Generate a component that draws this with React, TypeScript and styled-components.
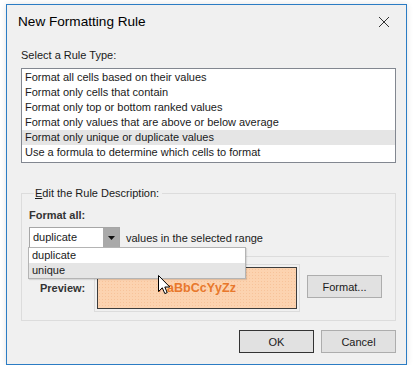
import styled, { createGlobalStyle } from "styled-components";

const GlobalStyle = createGlobalStyle`
  html, body {
    margin: 0;
    padding: 0;
    background: #ffffff;
  }
  body {
    font-family: "Liberation Sans", Arial, sans-serif;
    font-size: 11px;
    color: #1a1a1a;
  }
`;

const Window = styled.div`
  position: relative;
  box-sizing: border-box;
  margin: 4px 0 0 6px;
  width: 401px;
  height: 361px;
  background: #f0f0f0;
  border: 1px solid #2b7cc4;
  box-shadow: 0 0 6px rgba(0, 0, 0, 0.12);
`;

const TitleBar = styled.div`
  display: flex;
  align-items: center;
  justify-content: space-between;
  height: 33px;
  padding: 0 16px 0 11px;
  font-size: 13.6px;
  color: #000;
`;

const Body = styled.div`
  padding: 0 10px 0 14px;
`;

const Label = styled.div`
  height: 14px;
  line-height: 14px;
  margin: 10px 0 6px 0;
`;

const ListBox = styled.div`
  box-sizing: border-box;
  height: 95px;
  border: 1px solid #828790;
  background: #ffffff;
  padding-top: 1px;
`;

const ListItem = styled.div<{ $selected?: boolean }>`
  height: 15px;
  line-height: 15px;
  padding-left: 3px;
  background: ${(p) => (p.$selected ? "#e5e5e5" : "transparent")};
`;

const Group = styled.fieldset`
  box-sizing: border-box;
  margin: 23px 0 0 0;
  padding: 7px 6px 7px 7px;
  height: 135px;
  border: 1px solid #dcdcdc;
`;

const Legend = styled.legend`
  margin-left: 5px;
  padding: 0 3px 0 1px;
  line-height: 14px;
`;

const Accel = styled.span`
  text-decoration: underline;
`;

const Bold = styled.div`
  font-weight: 700;
  color: #333;
  line-height: 16px;
`;

const ComboRow = styled.div`
  display: flex;
  align-items: center;
  gap: 6px;
  margin-top: 4px;
`;

const Combo = styled.div`
  box-sizing: border-box;
  display: flex;
  width: 91px;
  height: 21px;
  border: 1px solid #a6a6a6;
  background: #ffffff;
`;

const ComboText = styled.div`
  flex: 1;
  padding-left: 3px;
  line-height: 19px;
`;

const ComboButton = styled.div`
  width: 16px;
  display: flex;
  align-items: center;
  justify-content: center;
  background: #a9a9a9;
`;

const Separator = styled.div`
  height: 1px;
  margin: 8px 0 0 0;
  background: #dcdcdc;
`;

const PreviewRow = styled.div`
  display: flex;
  align-items: center;
  margin-top: 7px;
`;

const PreviewLabel = styled(Bold)`
  width: 65px;
  padding-left: 11px;
  box-sizing: border-box;
`;

const PreviewFrame = styled.div`
  box-sizing: border-box;
  width: 206px;
  height: 48px;
  padding: 2px;
  border: 1px solid #dcdcdc;
`;

const PreviewSwatch = styled.div`
  box-sizing: border-box;
  height: 100%;
  display: flex;
  align-items: center;
  justify-content: center;
  border: 1px solid #3c3c3c;
  background-color: #fcd3b0;
  background-image: radial-gradient(#f7c39a 0.8px, transparent 0.9px);
  background-size: 3px 3px;
  color: #e8782c;
  font-weight: 700;
  font-size: 12.5px;
`;

const Button = styled.button<{ $default?: boolean }>`
  box-sizing: border-box;
  width: 75px;
  height: 23px;
  padding: 0;
  font: inherit;
  color: #1a1a1a;
  background: #e1e1e1;
  border: 1px solid ${(p) => (p.$default ? "#333333" : "#adadad")};
`;

const FormatButton = styled(Button)`
  margin: -3px 0 0 7px;
`;

const Footer = styled.div`
  display: flex;
  justify-content: flex-end;
  gap: 7px;
  margin-top: 9px;
`;

const Dropdown = styled.div`
  position: absolute;
  left: 21px;
  top: 242px;
  box-sizing: border-box;
  width: 218px;
  height: 32px;
  background: #ffffff;
  border: 1px solid #b4b4b4;
  box-shadow: 1px 1px 1px rgba(0, 0, 0, 0.1);
`;

const DropItem = styled.div<{ $hover?: boolean }>`
  height: 15px;
  line-height: 15px;
  padding-left: 3px;
  background: ${(p) => (p.$hover ? "#e5e5e5" : "transparent")};
`;

const Cursor = styled.svg`
  position: absolute;
  left: 151px;
  top: 270px;
`;

export default function App() {
  return (
    <>
      <GlobalStyle />
      <Window>
        <TitleBar>
          <span>New Formatting Rule</span>
          <svg width="12" height="12" viewBox="0 0 12 12">
            <path d="M1 1L11 11M11 1L1 11" stroke="#333" strokeWidth="1" />
          </svg>
        </TitleBar>
        <Body>
          <Label>Select a Rule Type:</Label>
          <ListBox>
            <ListItem>Format all cells based on their values</ListItem>
            <ListItem>Format only cells that contain</ListItem>
            <ListItem>Format only top or bottom ranked values</ListItem>
            <ListItem>Format only values that are above or below average</ListItem>
            <ListItem $selected>Format only unique or duplicate values</ListItem>
            <ListItem>Use a formula to determine which cells to format</ListItem>
          </ListBox>
          <Group>
            <Legend>
              <Accel>E</Accel>dit the Rule Description:
            </Legend>
            <Bold>Format all:</Bold>
            <ComboRow>
              <Combo>
                <ComboText>duplicate</ComboText>
                <ComboButton>
                  <svg width="7" height="4" viewBox="0 0 7 4">
                    <path d="M0 0H7L3.5 4Z" fill="#111" />
                  </svg>
                </ComboButton>
              </Combo>
              <span>values in the selected range</span>
            </ComboRow>
            <Separator />
            <PreviewRow>
              <PreviewLabel>Preview:</PreviewLabel>
              <PreviewFrame>
                <PreviewSwatch>AaBbCcYyZz</PreviewSwatch>
              </PreviewFrame>
              <FormatButton>Format...</FormatButton>
            </PreviewRow>
          </Group>
          <Footer>
            <Button $default>OK</Button>
            <Button>Cancel</Button>
          </Footer>
        </Body>
        <Dropdown>
          <DropItem>duplicate</DropItem>
          <DropItem $hover>unique</DropItem>
        </Dropdown>
        <Cursor width="13" height="20" viewBox="0 0 13 20">
          <path
            d="M0.5 0.5V16.5L4.3 12.8L6.8 18.6L9.2 17.6L6.8 12H11.8Z"
            fill="#ffffff"
            stroke="#000"
            strokeWidth="1"
            strokeLinejoin="round"
          />
        </Cursor>
      </Window>
    </>
  );
}
